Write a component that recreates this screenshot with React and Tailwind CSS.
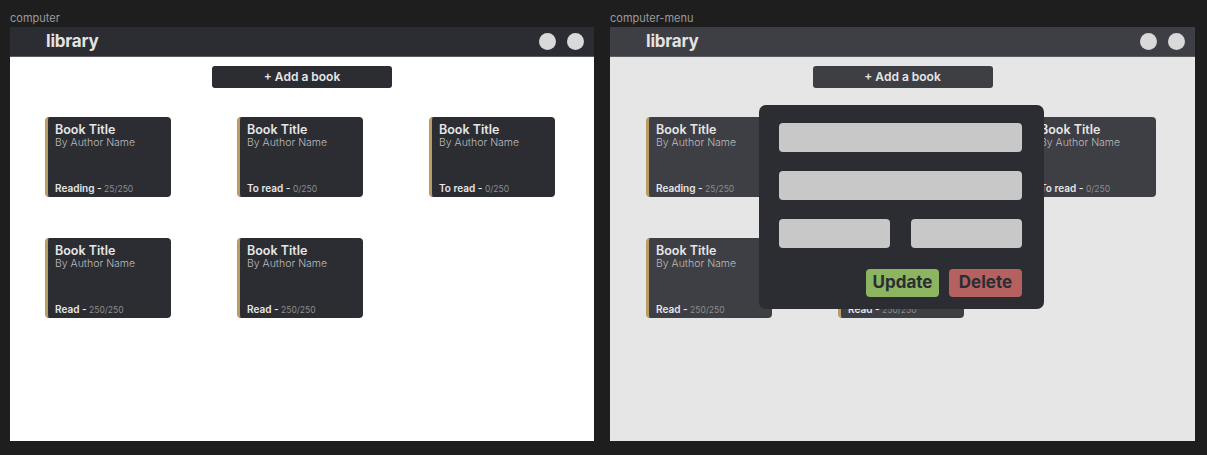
import React from 'react'

const BOOKS = [
  { title: 'Book Title', author: 'By Author Name', status: 'Reading', pages: '25/250' },
  { title: 'Book Title', author: 'By Author Name', status: 'To read', pages: '0/250' },
  { title: 'Book Title', author: 'By Author Name', status: 'To read', pages: '0/250' },
  { title: 'Book Title', author: 'By Author Name', status: 'Read', pages: '250/250' },
  { title: 'Book Title', author: 'By Author Name', status: 'Read', pages: '250/250' }
]

function BookCard({ book, dim }) {
  return (
    <div
      className={`w-[126px] h-[80px] rounded-[4px] border-l-[3px] border-[#b89c63] pl-[7px] pr-2 pt-[5px] pb-[2px] flex flex-col ${dim ? 'bg-[#3e3f45]' : 'bg-[#2c2d33]'}`}
    >
      <span className="text-[12.5px] font-semibold leading-[15px] text-[#e6e6e6]">{book.title}</span>
      <span className="text-[10.5px] leading-[12px] text-[#bdbdbd] font-light">{book.author}</span>
      <div className="mt-auto leading-[12px]">
        <span className="text-[10px] font-semibold text-[#e6e6e6]">{book.status} - </span>
        <span className="text-[8.5px] text-[#8d8d8d]">{book.pages}</span>
      </div>
    </div>
  )
}

function Frame({ label, dim, children }) {
  return (
    <div className="flex flex-col">
      <div className="h-[27px] pt-[11px] text-[11px] leading-[14px] text-[#9b9b9b]">{label}</div>
      <div className={`relative h-[414px] overflow-hidden flex flex-col ${dim ? 'w-[585px] bg-[#e6e6e6]' : 'w-[584px] bg-white'}`}>
        {/* Header */}
        <div className={`h-[30px] shrink-0 border-b border-[#5a5b60] flex items-center pl-[36px] pr-[10px] ${dim ? 'bg-[#3e3f45]' : 'bg-[#2c2d33]'}`}>
          <span className="text-[17px] font-bold text-[#e3e3e3] tracking-[-0.2px]">library</span>
          <div className="ml-auto flex gap-[11px]">
            <div className="w-[17px] h-[17px] rounded-full bg-[#d9d9d9]" />
            <div className="w-[17px] h-[17px] rounded-full bg-[#d9d9d9]" />
          </div>
        </div>

        {/* Add a book */}
        <div className="flex justify-center pt-[9px]">
          <button className={`w-[180px] h-[22px] rounded-[3px] text-[12px] font-semibold text-[#e6e6e6] ${dim ? 'bg-[#3e3f45]' : 'bg-[#2c2d33]'}`}>
            + Add a book
          </button>
        </div>

        {/* Books */}
        <div className={`grid grid-cols-[126px_126px_126px] gap-x-[66px] gap-y-[41px] pt-[29px] ${dim ? 'pl-[36px]' : 'pl-[35px]'}`}>
          {BOOKS.map((b, i) => (
            <BookCard key={i} book={b} dim={dim} />
          ))}
        </div>

        {children}
      </div>
    </div>
  )
}

export default function App() {
  return (
    <div className="w-[1207px] h-[455px] bg-[#1e1e1e] flex gap-[16px] pl-[10px]" style={{ fontFamily: 'Inter, "Noto Sans", sans-serif' }}>
      <Frame label="computer" />
      <Frame label="computer-menu" dim>
        {/* Edit menu */}
        <div className="absolute left-[149px] top-[78px] w-[285px] h-[204px] rounded-[7px] bg-[#2c2d33] pl-[20px] pr-[22px] pt-[18px] flex flex-col gap-[19px]">
          <div className="h-[29px] rounded-[4px] bg-[#c8c8c8]" />
          <div className="h-[29px] rounded-[4px] bg-[#c8c8c8]" />
          <div className="flex gap-[21px]">
            <div className="w-[111px] h-[29px] rounded-[4px] bg-[#c8c8c8]" />
            <div className="w-[111px] h-[29px] rounded-[4px] bg-[#c8c8c8]" />
          </div>
          <div className="flex justify-end gap-[10px] mt-[2px]">
            <button className="w-[73px] h-[28px] rounded-[4px] bg-[#8db461] text-[17px] font-bold text-[#2c2d33]">Update</button>
            <button className="w-[73px] h-[28px] rounded-[4px] bg-[#b5615f] text-[17px] font-bold text-[#2c2d33]">Delete</button>
          </div>
        </div>
      </Frame>
    </div>
  )
}
